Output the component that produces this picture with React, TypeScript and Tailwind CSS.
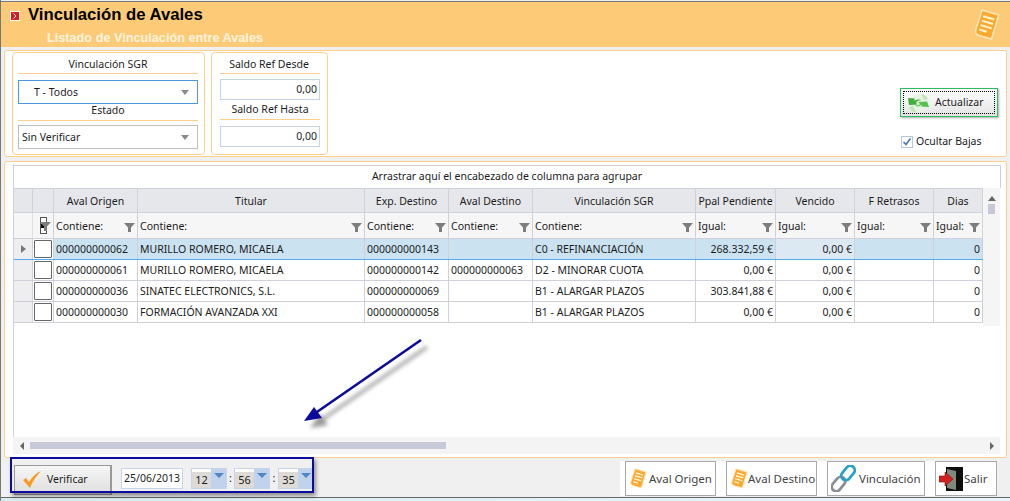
const rows = [
  { origen: '000000000062', titular: 'MURILLO ROMERO, MICAELA', exp: '000000000143', destino: '', vinc: 'C0 - REFINANCIACIÓN', ppal: '268.332,59 €' },
  { origen: '000000000061', titular: 'MURILLO ROMERO, MICAELA', exp: '000000000142', destino: '000000000063', vinc: 'D2 - MINORAR CUOTA', ppal: '0,00 €' },
  { origen: '000000000036', titular: 'SINATEC ELECTRONICS, S.L.', exp: '000000000069', destino: '', vinc: 'B1 - ALARGAR PLAZOS', ppal: '303.841,88 €' },
  { origen: '000000000030', titular: 'FORMACIÓN AVANZADA XXI', exp: '000000000058', destino: '', vinc: 'B1 - ALARGAR PLAZOS', ppal: '0,00 €' },
];

const cols = 'grid grid-cols-[19px_21px_84px_227px_84px_84px_163px_80px_79px_79px_49px]';

function Funnel() {
  return (
    <svg width="11" height="11" viewBox="0 0 11 11" className="shrink-0">
      <path d="M0 1h11L7 5.5V10H4V5.5z" fill="#7d7d7d" />
    </svg>
  );
}

function NoteIcon({ size = 22 }: { size?: number }) {
  return (
    <svg width={size} height={size * 1.15} viewBox="0 0 24 28">
      <path d="M8 1l15 4.500-6.500 21.500-11-3c-3-1-4-3-3-6z" fill="#fba92f" stroke="#ffe6bd" strokeWidth="1.4" />
      <path d="M9 6.500l10 3M7.800 10.500l10 3M6.600 14.500l10 3M5.500 18.500l6.500 2" stroke="#fff3d6" strokeWidth="1.8" />
    </svg>
  );
}

function RefreshIcon() {
  return (
    <svg width="23" height="20" viewBox="0 0 23 20">
      <circle cx="12" cy="10" r="9" fill="#e9f3e6" />
      <path d="M1 5l7 .5L7 8c3-2 6-2 8-.5-3-.5-5 .5-6 2.500l2 1.500-9 .5z" fill="#3fae3c" />
      <path d="M14 1c3 0 6 2 7 5l-4 1c-.5-2-2-4-3-6z" fill="#bfe8b4" />
      <path d="M22 14l-8-.5 1-2c-3 2-5 3-7 .5 2 1 4 .5 5-1l-2-2 9-.5 2 5.500z" fill="#55c24a" />
      <path d="M9 19c-3 0-6-2-7-5l4-1c.5 2 2 4 3 6z" fill="#bfe8b4" />
    </svg>
  );
}

function LinkIcon() {
  return (
    <svg width="25" height="27" viewBox="0 0 25 27" fill="none">
      <rect x="-4.500" y="-8" width="9" height="16" rx="4.500" transform="translate(7.500 19) rotate(40)" stroke="#8a8f96" strokeWidth="2.800" />
      <rect x="-4.500" y="-8" width="9" height="16" rx="4.500" transform="translate(17 8) rotate(40)" stroke="#27a3c9" strokeWidth="2.800" />
    </svg>
  );
}

function ExitIcon() {
  return (
    <svg width="24" height="25" viewBox="0 0 24 25">
      <rect x="7" y="1" width="17" height="24" fill="#0c0f0c" />
      <path d="M8 3l9 2v19l-9-2z" fill="#7d8a7c" />
      <path d="M0 10h6V6l8 7-8 7v-4H0z" fill="#d42020" stroke="#7a0f0f" strokeWidth="0.6" />
    </svg>
  );
}

function Select({ label, pad, focused }: { label: string; pad: string; focused?: boolean }) {
  return (
    <div className={`h-6 flex items-center justify-between bg-white border ${pad} pr-[8px] ${focused ? 'border-[#4a98e0]' : 'border-[#bdbdbd]'}`}>
      <span className="pt-px">{label}</span>
      <span className="w-0 h-0 border-x-4 border-x-transparent border-t-[5px] border-t-[#8a8a8a]" />
    </div>
  );
}

function Amount({ className }: { className: string }) {
  return (
    <div className={`h-[21px] flex items-center justify-end pr-[2px] bg-white border border-[#c5d3e8] ${className}`}>
      0,00
    </div>
  );
}

function TimeBox({ value }: { value: string }) {
  return (
    <div className="w-[36px] h-[21px] flex border border-[#c5d5ea] bg-white">
      <span className="w-[19px] flex items-center justify-center bg-[#dedbd6] mt-[3px] text-[11px]">{value}</span>
      <span className="flex-1 flex justify-center pt-[4px] bg-[#c0d2ec]">
        <span className="w-0 h-0 border-x-[5px] border-x-transparent border-t-[5px] border-t-[#4f86c6]" />
      </span>
    </div>
  );
}

function ActionButton({ width, icon, label, gap }: { width: string; icon: React.ReactNode; label: string; gap: string }) {
  return (
    <div className={`${width} h-[35px] flex items-center ${gap} pl-[3px] bg-white border border-[#aaaaaa] text-[11.500px] text-[#444] whitespace-nowrap`}>
      {icon}
      <span>{label}</span>
    </div>
  );
}

export default function App() {
  return (
    <div className="relative w-[1010px] h-[501px] overflow-hidden bg-[#f0f0f0] text-[10.500px] text-[#1c1c1c] font-['Noto_Sans',sans-serif]">
      <div className="h-[501px] flex flex-col pt-px border-l border-l-[#777]">
        {/* Header */}
        <div className="h-[46px] shrink-0 border-t border-t-[#777] bg-[#fdcb78] relative flex">
          <div className="pl-[9px] pt-[8px]">
            <div className="w-[10px] h-[10px] bg-white flex items-center justify-center mt-[1px]">
              <div className="w-[8px] h-[8px] bg-[#d81e1e] flex items-center justify-center">
                <svg width="6" height="6" viewBox="0 0 6 6" fill="none">
                  <path d="M1.500 0.500L4 3 1.500 5.500" stroke="#fff" strokeWidth="1" />
                </svg>
              </div>
            </div>
          </div>
          <div className="pl-[8px] pt-[2px]">
            <div className="font-['Liberation_Sans',sans-serif] font-bold text-[16.700px] leading-[22px] text-black">Vinculación de Avales</div>
            <div className="pl-[19px] pt-[4px] font-['Liberation_Sans',sans-serif] font-bold text-[12.700px] leading-[16px] text-[#fff3df]">Listado de Vinculación entre Avales</div>
          </div>
          <div className="ml-auto pr-[10px] pt-[7px]">
            <NoteIcon size={27} />
          </div>
        </div>

        {/* Filters */}
        <div className="mt-[3px] ml-[3px] mr-[3px] h-[107px] shrink-0 flex bg-white border border-[#fcd08c] rounded-[3px] pl-[7px] pt-px">
          <div className="w-[193px] h-[103px] border border-[#fcd08c] rounded-[4px] pl-[5px] pr-[6px]">
            <div className="h-[20px] flex items-end justify-center">Vinculación SGR</div>
            <div className="h-px bg-[#fcd08c]" />
            <div className="mt-[6px]"><Select label="T - Todos" pad="pl-[15px]" focused /></div>
            <div className="h-[15px] pb-[2px] flex items-center justify-center">Estado</div>
            <div className="h-px mt-[1px] bg-[#fcd08c]" />
            <div className="mt-[4px]"><Select label="Sin Verificar" pad="pl-[3px]" /></div>
          </div>
          <div className="ml-[6px] w-[117px] h-[103px] border border-[#fcd08c] rounded-[4px] pl-[8px] pr-[7px]">
            <div className="h-[20px] flex items-end justify-center pr-[2px]">Saldo Ref Desde</div>
            <div className="h-px bg-[#fcd08c]" />
            <Amount className="mt-[5px]" />
            <div className="h-[19px] flex items-center justify-center">Saldo Ref Hasta</div>
            <div className="h-px bg-[#fcd08c]" />
            <Amount className="mt-[6px]" />
          </div>
          <div className="ml-auto mr-[8px] w-[98px] pt-[36px]">
            <div className="h-[29px] p-[2px] border border-[#2dbd60] bg-gradient-to-b from-white to-[#e4e4e4] shadow-[1px_1px_2px_#aaa]">
              <div className="h-full flex items-center gap-[5px] pl-[3px] border border-dotted border-black">
                <RefreshIcon />
                <span>Actualizar</span>
              </div>
            </div>
            <div className="mt-[17px] flex items-center gap-[3px] pl-px">
              <div className="w-[12px] h-[12px] border border-[#b5c6e0] bg-white flex items-center justify-center">
                <svg width="10" height="10" viewBox="0 0 10 10" fill="none">
                  <path d="M1.500 5l2.500 2.500 4.500-6" stroke="#4a74b8" strokeWidth="1.600" />
                </svg>
              </div>
              <span>Ocultar Bajas</span>
            </div>
          </div>
        </div>

        {/* Grid */}
        <div className="mt-[4px] ml-[3px] mr-[3px] h-[297px] shrink-0 flex flex-col bg-white border border-[#fcd08c] rounded-[3px] pl-[8px] pr-[5px] pt-[3px]">
          <div className="h-[23px] shrink-0 flex items-center justify-center border-t border-x border-[#cfd0dc]">
            Arrastrar aquí el encabezado de columna para agrupar
          </div>
          <div className="flex flex-1 min-h-0">
            <div className="w-[970px] shrink-0 border-l border-[#cfd0dc]">
              <div className={`${cols} h-[25px] bg-[#e6e7eb] border-y border-[#cfd0dc]`}>
                {['', '', 'Aval Origen', 'Titular', 'Exp. Destino', 'Aval Destino', 'Vinculación SGR', 'Ppal Pendiente', 'Vencido', 'F Retrasos', 'Dias'].map((h, i) => (
                  <div key={i} className="flex items-center justify-center pt-[2px] border-r border-[#cfd0dc] whitespace-nowrap overflow-hidden">{h}</div>
                ))}
              </div>
              <div className={`${cols} h-[26px] bg-[#f6f6f6] border-b border-[#cfd0dc]`}>
                <div className="border-r border-[#e0e0e8]" />
                <div className="relative flex items-center justify-center border-r border-[#cfd0dc]">
                  <div className="w-[7px] h-[17px] border border-[#555] bg-white flex items-center">
                    <div className="w-full h-[4px] bg-black" />
                  </div>
                  <div className="absolute right-[2px] top-[8px]"><Funnel /></div>
                </div>
                {['Contiene:', 'Contiene:', 'Contiene:', 'Contiene:', 'Contiene:', 'Igual:', 'Igual:', 'Igual:', 'Igual:'].map((f, i) => (
                  <div key={i} className="flex items-center justify-between pl-[2px] pr-[2px] pt-[3px] border-r border-[#cfd0dc]">
                    <span>{f}</span>
                    <Funnel />
                  </div>
                ))}
              </div>
              {rows.map((r, i) => {
                const sel = i === 0;
                const line = sel ? 'border-b border-[#55aaee]' : 'border-b border-[#cfd0dc]';
                const num = 'flex items-center justify-end pr-[2px] pt-[2px] border-r border-[#cfd0dc]';
                const txt = 'flex items-center pl-[2px] pt-[2px] border-r border-[#cfd0dc] whitespace-nowrap overflow-hidden';
                return (
                  <div key={r.origen} className={`${cols} h-[21px] ${line} ${sel ? 'bg-[#cbe2f1]' : 'bg-white'}`}>
                    <div className="flex items-center justify-center bg-[#eeeef0] border-r border-[#cfd0dc]">
                      {sel && <span className="w-0 h-0 border-y-[4px] border-y-transparent border-l-[5px] border-l-[#777]" />}
                    </div>
                    <div className="flex items-center justify-center border-r border-[#cfd0dc] bg-white">
                      <div className="w-[18px] h-[18px] bg-white border border-[#666] rounded-[1px]" />
                    </div>
                    <div className={txt}>{r.origen}</div>
                    <div className={txt}>{r.titular}</div>
                    <div className={txt}>{r.exp}</div>
                    <div className={txt}>{r.destino}</div>
                    <div className={txt}>{r.vinc}</div>
                    <div className={num}>{r.ppal}</div>
                    <div className={`${num} ${sel ? 'bg-[#dce9f3]' : ''}`}>0,00 €</div>
                    <div className={num} />
                    <div className={num}>0</div>
                  </div>
                );
              })}
            </div>
            {/* vertical scrollbar */}
            <div className="w-[17px] shrink-0 h-[138px] bg-[#f5f5f5] flex flex-col items-center pt-[8px]">
              <span className="w-0 h-0 border-x-[4px] border-x-transparent border-b-[5px] border-b-[#666]" />
              <div className="w-[7px] h-[10px] bg-[#c8c9d8] mt-[3px]" />
            </div>
          </div>
          {/* horizontal scrollbar */}
          <div className="h-[17px] shrink-0 mb-[3px] mr-[1px] bg-[#f4f4f4] flex items-center">
            <span className="ml-[7px] w-0 h-0 border-y-[4px] border-y-transparent border-r-[4px] border-r-[#666]" />
            <div className="ml-[6px] w-[416px] h-[7px] bg-[#c8c9d8]" />
            <span className="ml-auto mr-[6px] w-0 h-0 border-y-[4px] border-y-transparent border-l-[4px] border-l-[#666]" />
          </div>
        </div>

        {/* Footer */}
        <div className="h-[39px] shrink-0 flex items-start pl-[13px] pr-[13px]">
          <div className="mt-[7px] w-[98px] h-[30px] flex items-center gap-[5px] pl-[7px] border border-[#999] border-r-2 bg-gradient-to-b from-[#f6f6f6] to-[#dedede]">
            <svg width="20" height="20" viewBox="0 0 20 20">
              <path d="M1 10l3-2 3 4C10 7 14 3 19 1 14 6 10 12 8 18z" fill="#f79a1e" />
            </svg>
            <span>Verificar</span>
          </div>
          <div className="mt-[10px] ml-[9px] w-[62px] h-[21px] flex items-center justify-center bg-white border border-[#c5d5ea]">25/06/2013</div>
          <div className="mt-[10px] ml-[8px] flex items-center">
            <TimeBox value="12" />
            <span className="w-[7px] text-center">:</span>
            <TimeBox value="56" />
            <span className="w-[8px] text-center">:</span>
            <TimeBox value="35" />
          </div>
          <div className="ml-auto mt-[3px] flex gap-[10px] bg-white pl-[5px]">
            <ActionButton width="w-[91px]" gap="gap-[2px]" icon={<NoteIcon size={18} />} label="Aval Origen" />
            <ActionButton width="w-[91px]" gap="gap-0" icon={<NoteIcon size={18} />} label="Aval Destino" />
            <ActionButton width="w-[98px]" gap="gap-[3px]" icon={<LinkIcon />} label="Vinculación" />
            <ActionButton width="w-[62px]" gap="gap-[1px]" icon={<ExitIcon />} label="Salir" />
          </div>
        </div>
        <div className="flex-1 border-t border-t-[#666] bg-gradient-to-r from-[#d8eeee] to-[#e8f6fa]" />
      </div>

      {/* Annotations laid over the screenshot */}
      <div className="absolute left-[10px] top-[457px] w-[304px] h-[36px] border-2 border-[#0b0b9e] shadow-[2px_3px_4px_rgba(0,0,0,0.4)]" />
      <svg className="absolute left-[290px] top-[330px]" width="150" height="110" viewBox="0 0 150 110">
        <defs>
          <filter id="arrowBlur" x="-20%" y="-20%" width="140%" height="140%">
            <feGaussianBlur stdDeviation="2" />
          </filter>
        </defs>
        <g filter="url(#arrowBlur)" opacity="0.55" transform="translate(6 7)">
          <path d="M131 10L24 84" stroke="#444" strokeWidth="3" />
          <path d="M14 91l10-14 8 11z" fill="#444" />
        </g>
        <path d="M131 10L24 84" stroke="#0a0a9c" strokeWidth="2.600" />
        <path d="M14 91l10-14 8 11z" fill="#0a0a9c" />
      </svg>
    </div>
  );
}
